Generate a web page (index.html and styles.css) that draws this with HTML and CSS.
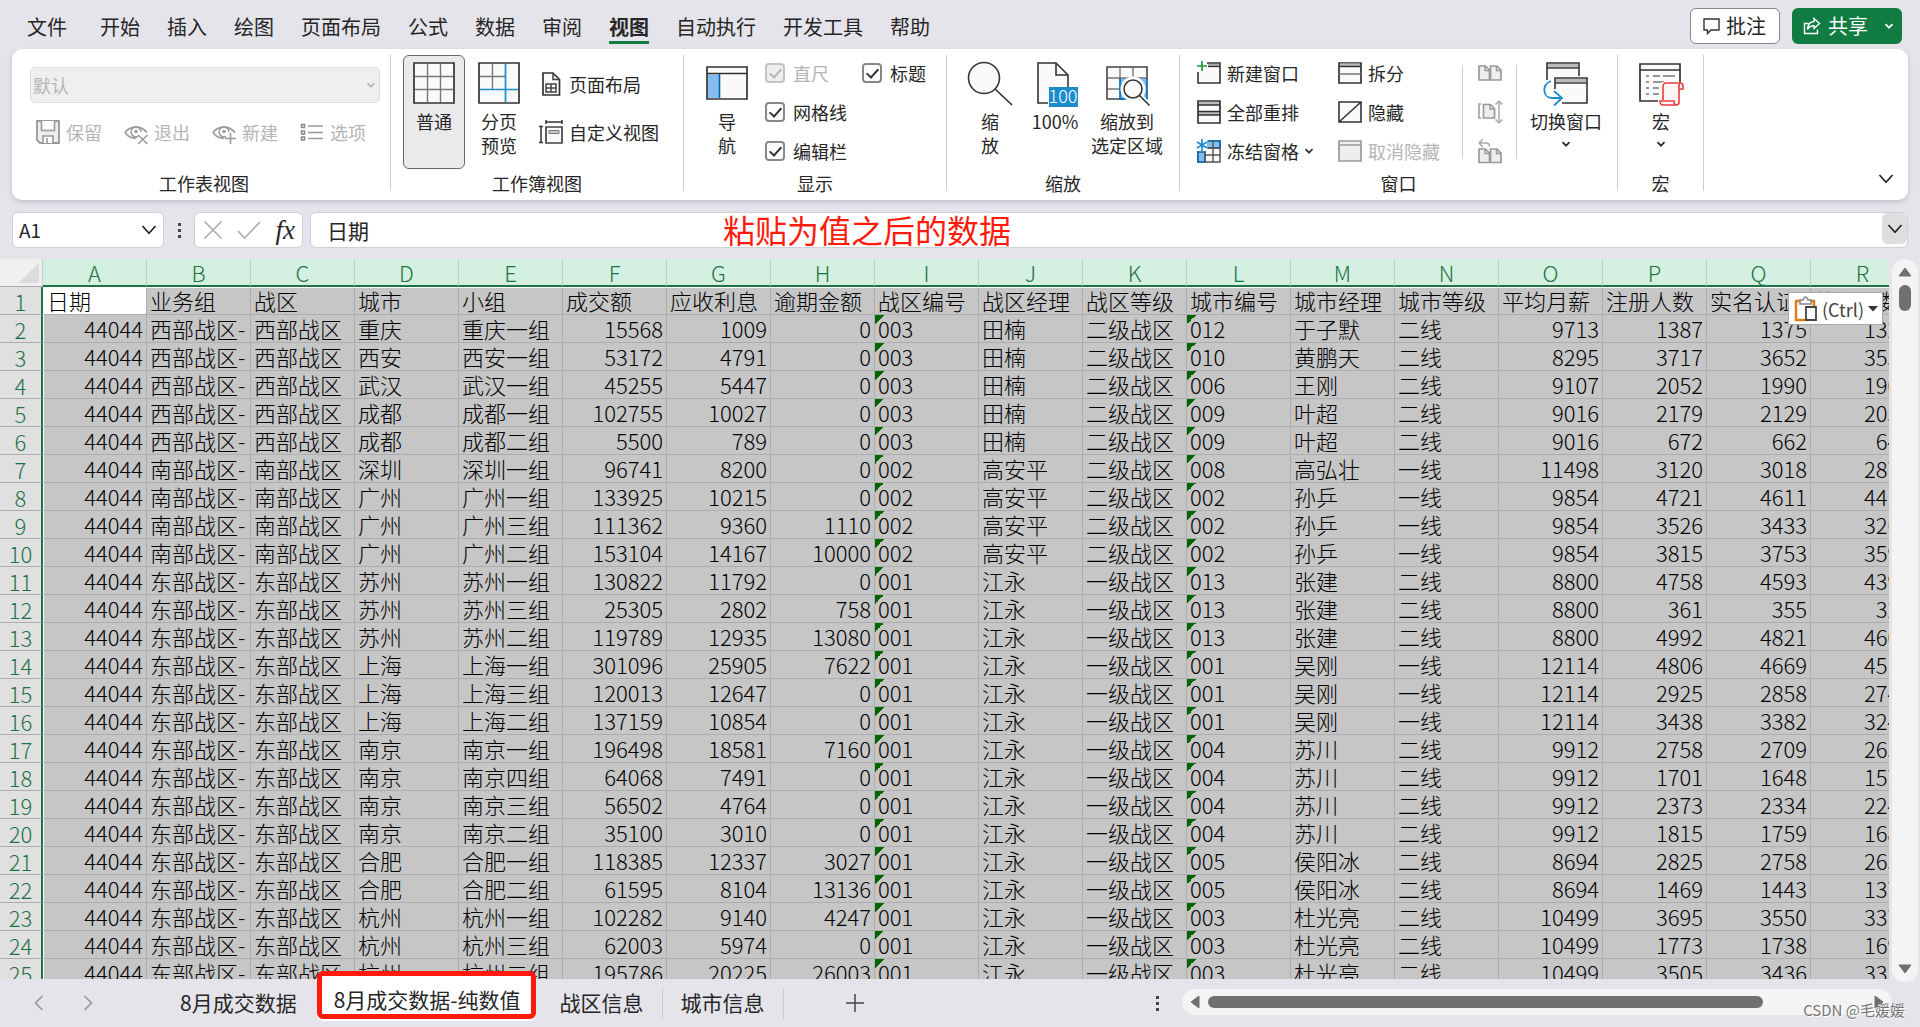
FILE: index.html
```html
<!DOCTYPE html>
<html lang="zh-CN">
<head>
<meta charset="utf-8">
<title>8月成交数据-纯数值</title>
<link rel="stylesheet" href="styles.css">
</head>
<body>
<svg class="defs" aria-hidden="true">
  <symbol id="chev" viewBox="0 0 10 10"><path d="M1.5 3.2 5 6.7 8.5 3.2" fill="none" stroke="currentColor" stroke-width="1.7"/></symbol>
  <symbol id="chev-lg" viewBox="0 0 16 16"><path d="M1.5 4 8 11.2 14.500 4" fill="none" stroke="currentColor" stroke-width="1.7"/></symbol>
  <symbol id="pages" viewBox="0 0 24 24"><path d="M1 5h6.500l4 4V19H1zM12.500 5H19l4 4V19H12.500z" fill="#eee" stroke="#999" stroke-width="1.700"/><path d="M7 5v4.500h4.500M18.500 5v4.500H23" fill="none" stroke="#999" stroke-width="1.500"/></symbol>
</svg>

<header class="menubar">
  <nav class="tabs">
    <a class="tab file" href="#">文件</a>
    <a class="tab" href="#">开始</a>
    <a class="tab" href="#">插入</a>
    <a class="tab" href="#">绘图</a>
    <a class="tab" href="#">页面布局</a>
    <a class="tab" href="#">公式</a>
    <a class="tab" href="#">数据</a>
    <a class="tab" href="#">审阅</a>
    <a class="tab active" href="#">视图</a>
    <a class="tab" href="#">自动执行</a>
    <a class="tab" href="#">开发工具</a>
    <a class="tab" href="#">帮助</a>
  </nav>
  <button class="comment" type="button">
    <svg width="17" height="18" viewBox="0 0 17 18"><path d="M1 2h15v11H8l-3.500 3.500V13H1z" fill="none" stroke="#333" stroke-width="1.400"/></svg>批注
  </button>
  <button class="share" type="button">
    <svg width="18" height="18" viewBox="0 0 18 18"><path d="M5.500 6.500H1.500v10h13v-4M11 1.500l5.500 5-5.500 5V8.700C8 8.700 6 9.700 4.500 12.500 4.800 7.500 7.500 4.700 11 4.500z" fill="none" stroke="#fff" stroke-width="1.400"/></svg>共享
    <svg class="end" width="10" height="10"><use href="#chev"/></svg>
  </button>
</header>

<section class="ribbon">
  <div class="group g-sheetview">
    <div class="body column">
      <div class="combo">
        <select aria-label="工作表视图" disabled><option>默认</option></select>
        <svg width="10" height="10"><use href="#chev"/></svg>
      </div>
      <div class="row">
        <button class="small off" type="button" disabled><svg width="24" height="24" viewBox="0 0 24 24"><path d="M1 1h22v22H4l-3-3z" fill="#eee" stroke="#999" stroke-width="1.800"/><path d="M5.500 1v9.500h13V1M7 23v-7h10v7M11 18v5" fill="#fff" stroke="#999" stroke-width="1.600"/></svg>保留</button>
        <button class="small off" type="button" disabled><svg width="24" height="24" viewBox="0 0 24 24"><path d="M1 12.500C6 5.500 17 5 23 12.500M1 12.500c3 4 7 6 11 5.500" fill="none" stroke="#999" stroke-width="1.700"/><path d="M14 16.500A5 5 0 1 1 17 12" fill="none" stroke="#999" stroke-width="1.500"/><circle cx="12" cy="11.500" r="1.700" fill="#999"/><path d="m14 15 9.500 9M23.500 15 14 24" stroke="#999" stroke-width="1.500"/></svg>退出</button>
        <button class="small off" type="button" disabled><svg width="24" height="24" viewBox="0 0 24 24"><path d="M1 12.500C6 5.500 17 5 23 12.500M1 12.500c3 4 7 6 11 5.500" fill="none" stroke="#999" stroke-width="1.700"/><path d="M14 16.500A5 5 0 1 1 17 12" fill="none" stroke="#999" stroke-width="1.500"/><circle cx="12" cy="11.500" r="1.700" fill="#999"/><path d="M13 18.500h11M18.500 13v11" stroke="#999" stroke-width="1.500"/></svg>新建</button>
        <button class="small off" type="button" disabled><svg width="24" height="24" viewBox="0 0 24 24"><path d="M1.500 4.500h3v3h-3zM1.500 11h3v3h-3zM1.500 17h3v3h-3z" fill="none" stroke="#888" stroke-width="1.500"/><path d="M8 6h15M8 12.500h15M8 18.500h15" stroke="#999" stroke-width="1.600"/></svg>选项</button>
      </div>
    </div>
    <h2>工作表视图</h2>
  </div>

  <div class="group g-bookview">
    <div class="body">
      <button class="large pressed" type="button"><svg width="46" height="47" viewBox="0 0 46 47"><path d="M3 1h40v40H3z" fill="#fafafa" stroke="#333" stroke-width="1.700"/><path d="M16.500 2v38M29.500 2v38M4 14.500h38M4 27.500h38" stroke="#777" stroke-width="1.400"/></svg>普通</button>
      <button class="large" type="button"><svg width="46" height="47" viewBox="0 0 46 47"><path d="M3 1h40v40H3z" fill="#fafafa" stroke="#333" stroke-width="1.700"/><path d="M16.500 2v25M4 14.500h25" stroke="#777" stroke-width="1.400"/><path d="M29.500 2v38M4 27.500h38" stroke="#1e8bcd" stroke-width="1.700"/></svg>分页<br>预览</button>
      <div class="stack wide">
        <button class="small" type="button"><svg width="24" height="24" viewBox="0 0 24 24"><path d="M4 1h10l6.500 6.500V23H4z" fill="#fafafa" stroke="#333" stroke-width="1.700"/><path d="M14 1v6.500h6M7 12h10v8H7zM12 12v8M7 16h10" fill="none" stroke="#444" stroke-width="1.500"/></svg>页面布局</button>
        <button class="small" type="button"><svg width="24" height="24" viewBox="0 0 24 24"><path d="M7 7h16v16H7z" fill="#fafafa" stroke="#444" stroke-width="1.700"/><path d="M10 10.500h10v3H10z" fill="#ccc" stroke="#777"/><path d="M7 2h16M7 0v4M23 0v4M2 6v17M0 6.500h4M0 22.500h4" fill="none" stroke="#333" stroke-width="1.500"/></svg>自定义视图</button>
      </div>
    </div>
    <h2>工作簿视图</h2>
  </div>

  <div class="group g-show">
    <div class="body">
      <button class="large" type="button"><svg width="46" height="47" viewBox="0 0 46 47"><path d="M3 5h40v32H3z" fill="#fafafa" stroke="#333" stroke-width="1.700"/><path d="M4 12.500h11V36H4z" fill="#84bdec"/><path d="M15.500 12v24" stroke="#0065b3" stroke-width="1.600"/><path d="M3 11.500h40" stroke="#333" stroke-width="1.500"/></svg>导<br>航</button>
      <div class="checks">
        <label class="off"><input type="checkbox" checked disabled>直尺</label>
        <label><input type="checkbox" checked>标题</label>
        <label><input type="checkbox" checked>网格线</label>
        <label class="newline"><input type="checkbox" checked>编辑栏</label>
      </div>
    </div>
    <h2>显示</h2>
  </div>

  <div class="group g-zoom">
    <div class="body">
      <button class="large" type="button"><svg width="46" height="47" viewBox="0 0 46 47"><circle cx="17" cy="16" r="15.500" fill="#fafafa" stroke="#333" stroke-width="1.600"/><path d="m28 27 17 16" stroke="#333" stroke-width="1.700"/></svg>缩<br>放</button>
      <button class="large" type="button"><svg width="46" height="47" viewBox="0 0 46 47"><path d="M16 41H6V1h18l12 12v12" fill="#fafafa" stroke="#333" stroke-width="1.600"/><path d="M24 1v12h12" fill="none" stroke="#333" stroke-width="1.600"/><path d="M17 25h29v20H17z" fill="#1e8bcd"/><text class="hundred" x="31" y="41" text-anchor="middle">100</text></svg>100%</button>
      <button class="large four" type="button"><svg width="46" height="47" viewBox="0 0 46 47"><path d="M3 5h40v32H3z" fill="#fafafa"/><path d="M16 16h27v21H16z" fill="#84bdec"/><path d="M3 16h40M3 27h13M16 5v11M29 5v11" stroke="#777" stroke-width="1.400"/><path d="M20 37H3V5h40v11" fill="none" stroke="#444" stroke-width="1.600"/><path d="M43 16v21H16V16" fill="none" stroke="#0065b3" stroke-width="1.600"/><circle cx="29" cy="27" r="10.500" fill="#fafafa" stroke="#fff" stroke-width="4"/><path d="m36 34 10 10" stroke="#fff" stroke-width="5"/><circle cx="29" cy="27" r="9" fill="#fafafa" stroke="#333" stroke-width="1.500"/><path d="m35.500 33.500 10 10" stroke="#333" stroke-width="1.600"/></svg>缩放到<br>选定区域</button>
    </div>
    <h2>缩放</h2>
  </div>

  <div class="group g-window">
    <div class="body">
      <div class="stack first">
        <button class="small" type="button"><svg width="24" height="24" viewBox="0 0 24 24"><path d="M10 2h13v20H1V11" fill="#fafafa" stroke="#333" stroke-width="1.600"/><path d="M11 3h11v2H11z" fill="#aaa"/><path d="M11 5.500h12" stroke="#333" stroke-width="1.300"/><path d="M5 0v10M0 5h10" stroke="#21963f" stroke-width="1.700"/></svg>新建窗口</button>
        <button class="small" type="button"><svg width="24" height="24" viewBox="0 0 24 24"><path d="M1 1h22v22H1z" fill="#fafafa" stroke="#333" stroke-width="1.700"/><path d="M2 2h20v3H2zM2 12h20v3H2z" fill="#bbb"/><path d="M1 5h22M1 11.500h22M1 15h22" stroke="#333" stroke-width="1.500"/></svg>全部重排</button>
        <button class="small" type="button"><svg width="24" height="24" viewBox="0 0 24 24"><path d="M1 2h22v21H1z" fill="#fafafa" stroke="#555" stroke-width="1.500"/><path d="M10 2h13v7H10zM1 13h7v10H1z" fill="#84bdec" stroke="#0065b3" stroke-width="1.600"/><path d="M8 9h15M8 16h15M8 9v14M16 2v21" fill="none" stroke="#555" stroke-width="1.400"/><path d="M0 0h10.500v12H0z" fill="#fff"/><path d="M5 0v12M0 3l10 6M10 3 0 9" stroke="#1e8bcd" stroke-width="1.700"/></svg>冻结窗格<svg class="drop" width="10" height="10"><use href="#chev"/></svg></button>
      </div>
      <div class="stack second">
        <button class="small" type="button"><svg width="24" height="24" viewBox="0 0 24 24"><path d="M1 2h22v20H1z" fill="#fafafa" stroke="#333" stroke-width="1.700"/><path d="M2 2.500h20V5H2z" fill="#bbb"/><path d="M1 5.500h22" stroke="#333" stroke-width="1.500"/><path d="M1 13h22" stroke="#777" stroke-width="1.500"/></svg>拆分</button>
        <button class="small" type="button"><svg width="24" height="24" viewBox="0 0 24 24"><path d="M1 2h22v20H1zM1 22 23 2" fill="#fafafa" stroke="#333" stroke-width="1.600"/></svg>隐藏</button>
        <button class="small off" type="button" disabled><svg width="24" height="24" viewBox="0 0 24 24"><path d="M1 2h22v20H1zM1 6h22" fill="#eee" stroke="#999" stroke-width="1.700"/></svg>取消隐藏</button>
      </div>
      <div class="stack icons">
        <button class="small" type="button" aria-label="并排查看" disabled><svg width="24" height="24"><use href="#pages"/></svg></button>
        <button class="small" type="button" aria-label="同步滚动" disabled><svg width="24" height="24" viewBox="0 0 24 24"><path d="M5.500 4.500h7l4 4V18h-11z" fill="#eee" stroke="#999" stroke-width="1.700"/><path d="M12 4.500V9h4.500M3 4H1v14h2" fill="none" stroke="#999" stroke-width="1.500"/><path d="M21 1v22M17.500 4.500 21 1l3.500 3.500M17.500 19.500 21 23l3.500-3.500" fill="none" stroke="#aaa" stroke-width="1.500"/></svg></button>
        <button class="small" type="button" aria-label="重设窗口位置" disabled><svg width="24" height="24" viewBox="0 0 24 24"><path d="M1 10h6.500l4 4v9.500H1zM12.500 10H19l4 4v9.500H12.500z" fill="#eee" stroke="#999" stroke-width="1.700"/><path d="M7 10v4.500h4.500M18.500 10v4.500H23" fill="none" stroke="#999" stroke-width="1.500"/><path d="M5 0 1 4l4 4M1 4h7c2 0 3.500 1 3.500 3.500" fill="none" stroke="#aaa" stroke-width="1.500"/></svg></button>
      </div>
      <button class="large four" type="button"><svg width="46" height="47" viewBox="0 0 46 47"><path d="M4 1h32v22H4z" fill="#fafafa" stroke="#333" stroke-width="1.600"/><path d="M5 2h30v3.500H5z" fill="#bbb"/><path d="M4 6h32" stroke="#333" stroke-width="1.400"/><path d="M0 18h10v-4h30v12H0z" fill="#fff"/><path d="M12 16h32v25H12z" fill="#fafafa" stroke="#333" stroke-width="1.600"/><path d="M13 17h30v3.500H13z" fill="#bbb"/><path d="M12 21h32" stroke="#333" stroke-width="1.400"/><path d="M10 27h9v17h-9z" fill="#fff"/><path d="M8 19C-2 23 0 36 9 36h10M11 29l8 7-8 7.500" fill="none" stroke="#1e8bcd" stroke-width="1.800"/></svg>切换窗口<svg class="drop" width="10" height="10"><use href="#chev"/></svg></button>
    </div>
    <h2>窗口</h2>
  </div>

  <div class="group g-macro">
    <div class="body">
      <button class="large" type="button"><svg width="46" height="47" viewBox="0 0 46 47"><path d="M2 2h40v37H2z" fill="#fafafa" stroke="#333" stroke-width="1.700"/><path d="M2 8h40" stroke="#333" stroke-width="1.500"/><path d="M8 14h3M15 14h7M25 14h12M8 20h3M15 20h11M8 26h3M15 26h6M8 32h3M15 32h6" stroke="#777" stroke-width="1.500"/><path d="M24 20h22v27H20V36h4z" fill="#fff"/><path d="M25 38V25q0-4 3-4h14q3 0 3 3v3h-4v13q0 3-3 3H25q-3 0-3-4h14q0 4 3 4M41 27v-3q0-3 2-3" fill="#fff5f5" stroke="#e83c3c" stroke-width="1.600"/></svg>宏<svg class="drop" width="10" height="10"><use href="#chev"/></svg></button>
    </div>
    <h2>宏</h2>
  </div>
  <button class="collapse" type="button" aria-label="折叠功能区"><svg width="16" height="16"><use href="#chev-lg"/></svg></button>
</section>

<section class="formula-row">
  <div class="namebox">
    <input type="text" value="A1" aria-label="名称框">
    <button type="button" aria-label="名称列表"><svg width="16" height="16"><use href="#chev-lg"/></svg></button>
  </div>
  <span class="dots"><i></i><i></i><i></i></span>
  <div class="fx">
    <button type="button" aria-label="取消"><svg width="20" height="20" viewBox="0 0 20 20"><path d="m1.500 1.500 17 17M18.500 1.500l-17 17" stroke="#aaa" stroke-width="1.600"/></svg></button>
    <button type="button" aria-label="输入"><svg width="24" height="20" viewBox="0 0 24 20"><path d="m1 11 6.500 7L23 2" fill="none" stroke="#aaa" stroke-width="1.600"/></svg></button>
    <button class="fn" type="button">fx</button>
  </div>
  <div class="formula">
    <input type="text" value="日期" aria-label="编辑栏">
    <button type="button" aria-label="展开编辑栏"><svg width="16" height="16"><use href="#chev-lg"/></svg></button>
    <span class="note">粘贴为值之后的数据</span>
  </div>
</section>

<main class="sheet">
  <div class="grid"><table id="cells"></table></div>
  <div class="vscroll">
    <svg width="14" height="10" viewBox="0 0 14 10"><path d="M7 1 13 9H1z" fill="#707070" stroke="#707070" stroke-linejoin="round"/></svg>
    <span class="thumb"></span>
    <svg class="last" width="14" height="10" viewBox="0 0 14 10"><path d="M7 9 13 1H1z" fill="#707070" stroke="#707070" stroke-linejoin="round"/></svg>
  </div>
  <button class="paste" type="button">
    <svg width="24" height="26" viewBox="0 0 24 26"><path d="M12 24H2V5h18v5" fill="#fff" stroke="#e07b1a" stroke-width="2.500"/><path d="M6 8V4h3q1-3 2.500-3T14 4h3v4z" fill="#fff" stroke="#888" stroke-width="1.600"/><path d="M12 11h10v13H12z" fill="#fff" stroke="#444" stroke-width="1.800"/></svg>(Ctrl)
    <svg width="10" height="6" viewBox="0 0 10 6"><path d="M0 0h10L5 5.500z" fill="#333"/></svg>
  </button>
</main>

<footer class="sheetbar">
  <div class="nav">
    <button type="button" aria-label="上一个"><svg width="10" height="16" viewBox="0 0 10 16"><path d="M8.500 1 1.500 8l7 7" fill="none" stroke="#999" stroke-width="1.700"/></svg></button>
    <button type="button" aria-label="下一个"><svg width="10" height="16" viewBox="0 0 10 16"><path d="m1.500 1 7 7-7 7" fill="none" stroke="#999" stroke-width="1.700"/></svg></button>
  </div>
  <a class="sheet-tab" href="#">8月成交数据</a>
  <a class="sheet-tab current" href="#">8月成交数据-纯数值</a>
  <a class="sheet-tab" href="#">战区信息</a>
  <a class="sheet-tab lined" href="#">城市信息</a>
  <button class="add" type="button" aria-label="新工作表"><svg width="18" height="18" viewBox="0 0 18 18"><path d="M9 0v18M0 9h18" stroke="#444" stroke-width="1.500"/></svg></button>
  <span class="dots"><i></i><i></i><i></i></span>
  <div class="hscroll">
    <svg width="10" height="14" viewBox="0 0 10 14"><path d="M1 7 9 1v12z" fill="#707070" stroke="#707070" stroke-linejoin="round"/></svg>
    <span class="thumb"></span>
    <svg class="last" width="10" height="14" viewBox="0 0 10 14"><path d="M9 7 1 1v12z" fill="#707070" stroke="#707070" stroke-linejoin="round"/></svg>
  </div>
  <span class="watermark">CSDN @毛媛媛</span>
</footer>
<script src="script.js"></script>
</body>
</html>
```
FILE: styles.css
```css
* { box-sizing: border-box; }
body {
  margin: 0;
  height: 100vh;
  display: flex;
  flex-direction: column;
  overflow: hidden;
  background: #e4e4ea;
  color: #262626;
  font: 18px/24px "Noto Sans CJK SC", "Noto Sans", sans-serif;
}
button, input, select { font: inherit; color: inherit; border: 0; padding: 0; margin: 0; background: none; }
a { color: inherit; text-decoration: none; }
svg { display: block; flex: none; overflow: visible; }
.defs { display: none; }

/* menu */
.menubar { display: flex; align-items: center; gap: 12px; height: 49px; padding: 0 18px 0 27px; flex: none; }
.tabs { display: flex; gap: 27px; flex: 1; font-size: 20px; }
.tab { height: 49px; line-height: 54px; white-space: nowrap; }
.tab.file { margin-right: 6px; }
.tab.active { font-weight: 700; background: linear-gradient(#107c41, #107c41) 0 41px / 100% 3px no-repeat; }
.comment, .share { display: flex; align-items: center; height: 36px; border-radius: 6px; font-size: 20px; }
.menubar > button { align-self: flex-start; margin-top: 8px; }
.comment { gap: 6px; padding: 0 13px 0 12px; background: #fff; border: 1px solid #888; }
.share { gap: 7px; padding: 0 8px 0 11px; background: #107c41; color: #fff; }
.share .end { margin-left: 9px; }

/* ribbon */
.ribbon {
  display: flex;
  flex: none;
  height: 151px;
  margin: 0 12px;
  padding: 6px 0 0 6px;
  background: #fff;
  border-radius: 10px;
  box-shadow: 0 2px 5px #a9a9b299;
}
.group { display: flex; flex-direction: column; flex: none; height: 136px; border-right: 1px solid #ccc; }
.body { display: flex; flex: none; height: 115px; padding-left: 12px; }
.group h2 { flex: none; margin: 0; font-size: 18px; line-height: 26px; font-weight: 400; text-align: center; }
.g-sheetview { width: 373px; }
.g-bookview { width: 293px; }
.g-show { width: 263px; }
.g-zoom { width: 233px; }
.g-window { width: 438px; }
.g-macro { width: 86px; }
.g-window .body { padding-left: 17px; }
.body.column { flex-direction: column; padding: 12px 10px 0 12px; gap: 17px; }
.combo { display: flex; align-items: center; height: 36px; border: 1px solid #ddd; border-radius: 5px; background: #efefef; color: #b5b5b5; padding-right: 3px; }
.combo select { flex: 1; height: 34px; appearance: none; padding-left: 2px; opacity: 1; }
.row { display: flex; gap: 22px; padding-left: 6px; }
.small { display: flex; align-items: center; gap: 6px; height: 24px; line-height: 22px; white-space: nowrap; }
.off { color: #b5b5b5; }
.small .drop { margin-left: -1px; color: #333; }
.large { display: flex; flex-direction: column; align-items: center; width: 62px; height: 114px; margin-right: 3px; padding-top: 6px; border: 1px solid transparent; border-radius: 6px; white-space: nowrap; line-height: 24px; }
.large.pressed { background: #eaeaea; border-color: #666; }
.large.four { width: 76px; }
.large .drop { margin-top: 6px; }
.stack { display: flex; flex-direction: column; gap: 15px; padding-top: 6px; }
.stack.wide { gap: 24px; padding: 17px 0 0 6px; }
.stack.first { width: 141px; }
.stack.second { width: 124px; }
.stack.icons { height: 94px; margin: 10px 11px 0 0; padding: 0 14px 0 15px; gap: 15px; border: solid #ccc; border-width: 0 1px; justify-content: center; }
.checks { display: grid; grid-template-columns: 82px 82px; grid-auto-rows: 24px; gap: 15px; align-content: start; padding: 6px 0 0 4px; }
.checks label { display: flex; align-items: center; gap: 8px; white-space: nowrap; }
.newline { grid-column: 1; grid-row: 3; }
.checks label:nth-child(3) { grid-column: 1; grid-row: 2; }
.checks input { appearance: none; width: 20px; height: 20px; border: 2px solid #888; border-radius: 4px; display: grid; justify-content: center; }
.checks input::before { content: ""; width: 5px; height: 10px; margin-top: 1px; border: solid #333; border-width: 0 2px 2px 0; transform: rotate(42deg); }
.checks input:disabled { border-color: #c4c4c4; background: #eee; }
.checks input:disabled::before { border-color: #b5b5b5; }
.hundred { font: 18px "Noto Sans CJK SC", sans-serif; font-weight: 300; fill: #fff; }
.collapse { align-self: flex-end; margin: 0 14px 13px auto; }

/* formula bar */
.formula-row { display: flex; flex: none; height: 36px; margin: 12px 12px 11px; }
.namebox, .fx, .formula { display: flex; align-items: center; background: #fff; border: 1px solid #d0d0d4; border-radius: 6px; }
.namebox { width: 152px; padding: 0 6px; font-size: 19px; }
.namebox input { flex: 1; min-width: 0; }
.dots { display: flex; flex-direction: column; justify-content: center; gap: 3px; width: 30px; align-items: center; }
.dots i { width: 3px; height: 3px; background: #444; }
.fx { width: 109px; justify-content: space-between; padding: 0 7px 0 8px; }
.fn { font: italic 27px/32px "Liberation Serif", serif; }
.formula { position: relative; flex: 1; margin-left: 7px; padding-left: 16px; font-size: 21px; }
.formula input { flex: 1; min-width: 0; height: 32px; }
.formula button { align-self: flex-start; display: grid; place-items: center; width: 25px; height: 31px; border-radius: 6px; background: #dedede; }
.note { position: absolute; left: 412px; top: 0; font-size: 32px; line-height: 32px; color: #ff1a0c; white-space: nowrap; }

/* grid */
.sheet { position: relative; display: flex; flex: 1; min-height: 0; }
.grid { flex: 1; min-width: 0; overflow: hidden; margin-right: 3px; background: #c6c6c6; }
table { width: 1915px; table-layout: fixed; border-collapse: separate; border-spacing: 0; font-size: 22px; color: #000; }
th, td { height: 28px; padding: 0; line-height: 26px; font-weight: 300; white-space: nowrap; }
th { color: #1e7145; text-align: center; }
thead th { background: #d3f0e0; border-right: 1px solid #c0ccc6; border-bottom: 2px solid #217346; }
thead th.corner { background: linear-gradient(135deg, transparent 50%, #dcdcdc 50%) 19px 4px / 20px 20px no-repeat #efefef; border-right: 1px solid #ccc; border-bottom: 1px solid #ababab; }
tbody th { background: #e0e0e0; border-right: 2px solid #217346; border-bottom: 1px solid #ababab; }
td { padding: 0 3px 2px; line-height: 24px; border-right: 1px solid #adadad; border-bottom: 1px solid #adadad; }
td.num { text-align: right; }
td:nth-child(2) { border-left: 1px solid #fff; }
tbody tr:first-child td { border-top: 1px solid #fff; }
td.cursor { background: #fff; }
td.flag { background: linear-gradient(135deg, #006400 50%, transparent 50%) 0 0 / 9px 9px no-repeat; }
.vscroll { display: flex; flex-direction: column; align-items: center; width: 26px; margin: 0 2px -3px 0; padding: 8px 0; background: #f4f4f4; border-radius: 13px; z-index: 1; }
.vscroll .thumb { width: 12px; height: 26px; margin-top: 8px; border-radius: 6px; background: #707070; }
.last { margin-top: auto; }
.paste { position: absolute; right: 37px; top: 33px; display: flex; align-items: center; gap: 4px; height: 33px; padding: 0 4px 0 5px; background: #fff; border: 1px solid #aaa; font-size: 18px; color: #444; }

/* sheet bar */
.sheetbar { position: relative; display: flex; align-items: center; flex: none; height: 48px; font-size: 21px; }
.nav { display: flex; gap: 39px; padding-left: 34px; width: 180px; }
.sheet-tab { line-height: 28px; padding-bottom: 3px; white-space: nowrap; margin-right: 36px; }
.sheet-tab.current { position: relative; margin: -16px 24px 0 -16px; padding: 0 10px 0 12px; height: 48px; line-height: 46px; background: #fff; border: 5px solid #ff1a0c; border-radius: 6px; box-shadow: 0 2px #fff; z-index: 1; }
.sheet-tab.lined { margin: 0 62px 0 -18px; padding: 0 18px 3px; border: solid #ccc; border-width: 0 1px; }
.sheetbar .dots { margin-left: auto; margin-right: 9px; }
.hscroll { display: flex; align-items: center; width: 37%; height: 26px; margin: -2px 28px 0 0; padding: 0 8px; background: #f4f4f4; border-radius: 13px; }
.hscroll .thumb { width: 80%; height: 12px; margin-left: 8px; border-radius: 6px; background: #707070; }
.hscroll .last { margin: 0 0 0 auto; }
.watermark { position: absolute; right: 15px; bottom: 6px; font-size: 15px; line-height: 22px; color: #777; text-shadow: 1px 1px #fff; }
```
FILE: script.js
```js
const headers = ["日期","业务组","战区","城市","小组","成交额","应收利息","逾期金额","战区编号","战区经理","战区等级","城市编号","城市经理","城市等级","平均月薪","注册人数","实名认证","放款人数"];

const zones = {
  西: ["西部战区", "003", "田楠", "二级战区"],
  南: ["南部战区", "002", "高安平", "二级战区"],
  东: ["东部战区", "001", "江永", "一级战区"]
};

const cities = {
  重庆: ["西", "012", "于子默", "二线", 9713],
  西安: ["西", "010", "黄鹏天", "二线", 8295],
  武汉: ["西", "006", "王刚", "二线", 9107],
  成都: ["西", "009", "叶超", "二线", 9016],
  深圳: ["南", "008", "高弘壮", "一线", 11498],
  广州: ["南", "002", "孙乒", "一线", 9854],
  苏州: ["东", "013", "张建", "二线", 8800],
  上海: ["东", "001", "吴刚", "一线", 12114],
  南京: ["东", "004", "苏川", "二线", 9912],
  合肥: ["东", "005", "侯阳冰", "二线", 8694],
  杭州: ["东", "003", "杜光亮", "二线", 10499]
};

// city, team, amount, interest, overdue, registered, verified, lent
const deals = [
  ["重庆","一",15568,1009,0,1387,1375,1321],
  ["西安","一",53172,4791,0,3717,3652,3532],
  ["武汉","一",45255,5447,0,2052,1990,1906],
  ["成都","一",102755,10027,0,2179,2129,2055],
  ["成都","二",5500,789,0,672,662,640],
  ["深圳","一",96741,8200,0,3120,3018,2877],
  ["广州","一",133925,10215,0,4721,4611,4412],
  ["广州","三",111362,9360,1110,3526,3433,3260],
  ["广州","二",153104,14167,10000,3815,3753,3596],
  ["苏州","一",130822,11792,0,4758,4593,4390],
  ["苏州","三",25305,2802,758,361,355,327],
  ["苏州","二",119789,12935,13080,4992,4821,4605],
  ["上海","一",301096,25905,7622,4806,4669,4513],
  ["上海","三",120013,12647,0,2925,2858,2742],
  ["上海","二",137159,10854,0,3438,3382,3245],
  ["南京","一",196498,18581,7160,2758,2709,2633],
  ["南京","四",64068,7491,0,1701,1648,1574],
  ["南京","三",56502,4764,0,2373,2334,2245],
  ["南京","二",35100,3010,0,1815,1759,1680],
  ["合肥","一",118385,12337,3027,2825,2758,2633],
  ["合肥","二",61595,8104,13136,1469,1443,1374],
  ["杭州","一",102282,9140,4247,3695,3550,3372],
  ["杭州","三",62003,5974,0,1773,1738,1690],
  ["杭州","二",195786,20225,26003,3505,3436,3332]
];

const rows = deals.map(([city, team, amount, interest, overdue, reg, ver, lent]) => {
  const [z, cityNo, manager, level, salary] = cities[city];
  const [zone, zoneNo, zoneManager, zoneLevel] = zones[z];
  return [44044, zone + "-", zone, city, city + team + "组", amount, interest, overdue,
    zoneNo, zoneManager, zoneLevel, cityNo, manager, level, salary, reg, ver, lent];
});

const letters = headers.map((_, i) => String.fromCharCode(65 + i));
const cell = (v, r, c) => {
  let cls = typeof v === "number" ? "num" : "";
  if (r > 0 && (c === 8 || c === 11)) cls = "flag";
  if (r === 0 && c === 0) cls = "cursor";
  return `<td${cls ? ` class="${cls}"` : ""}>${v}</td>`;
};

document.getElementById("cells").innerHTML =
  `<colgroup><col style="width:43px">${letters.map(() => '<col style="width:104px">').join("")}</colgroup>` +
  `<thead><tr><th class="corner"></th>${letters.map(l => `<th scope="col">${l}</th>`).join("")}</tr></thead>` +
  `<tbody>${[headers, ...rows].map((row, r) =>
    `<tr><th scope="row">${r + 1}</th>${row.map((v, c) => cell(v, r, c)).join("")}</tr>`).join("")}</tbody>`;
```
